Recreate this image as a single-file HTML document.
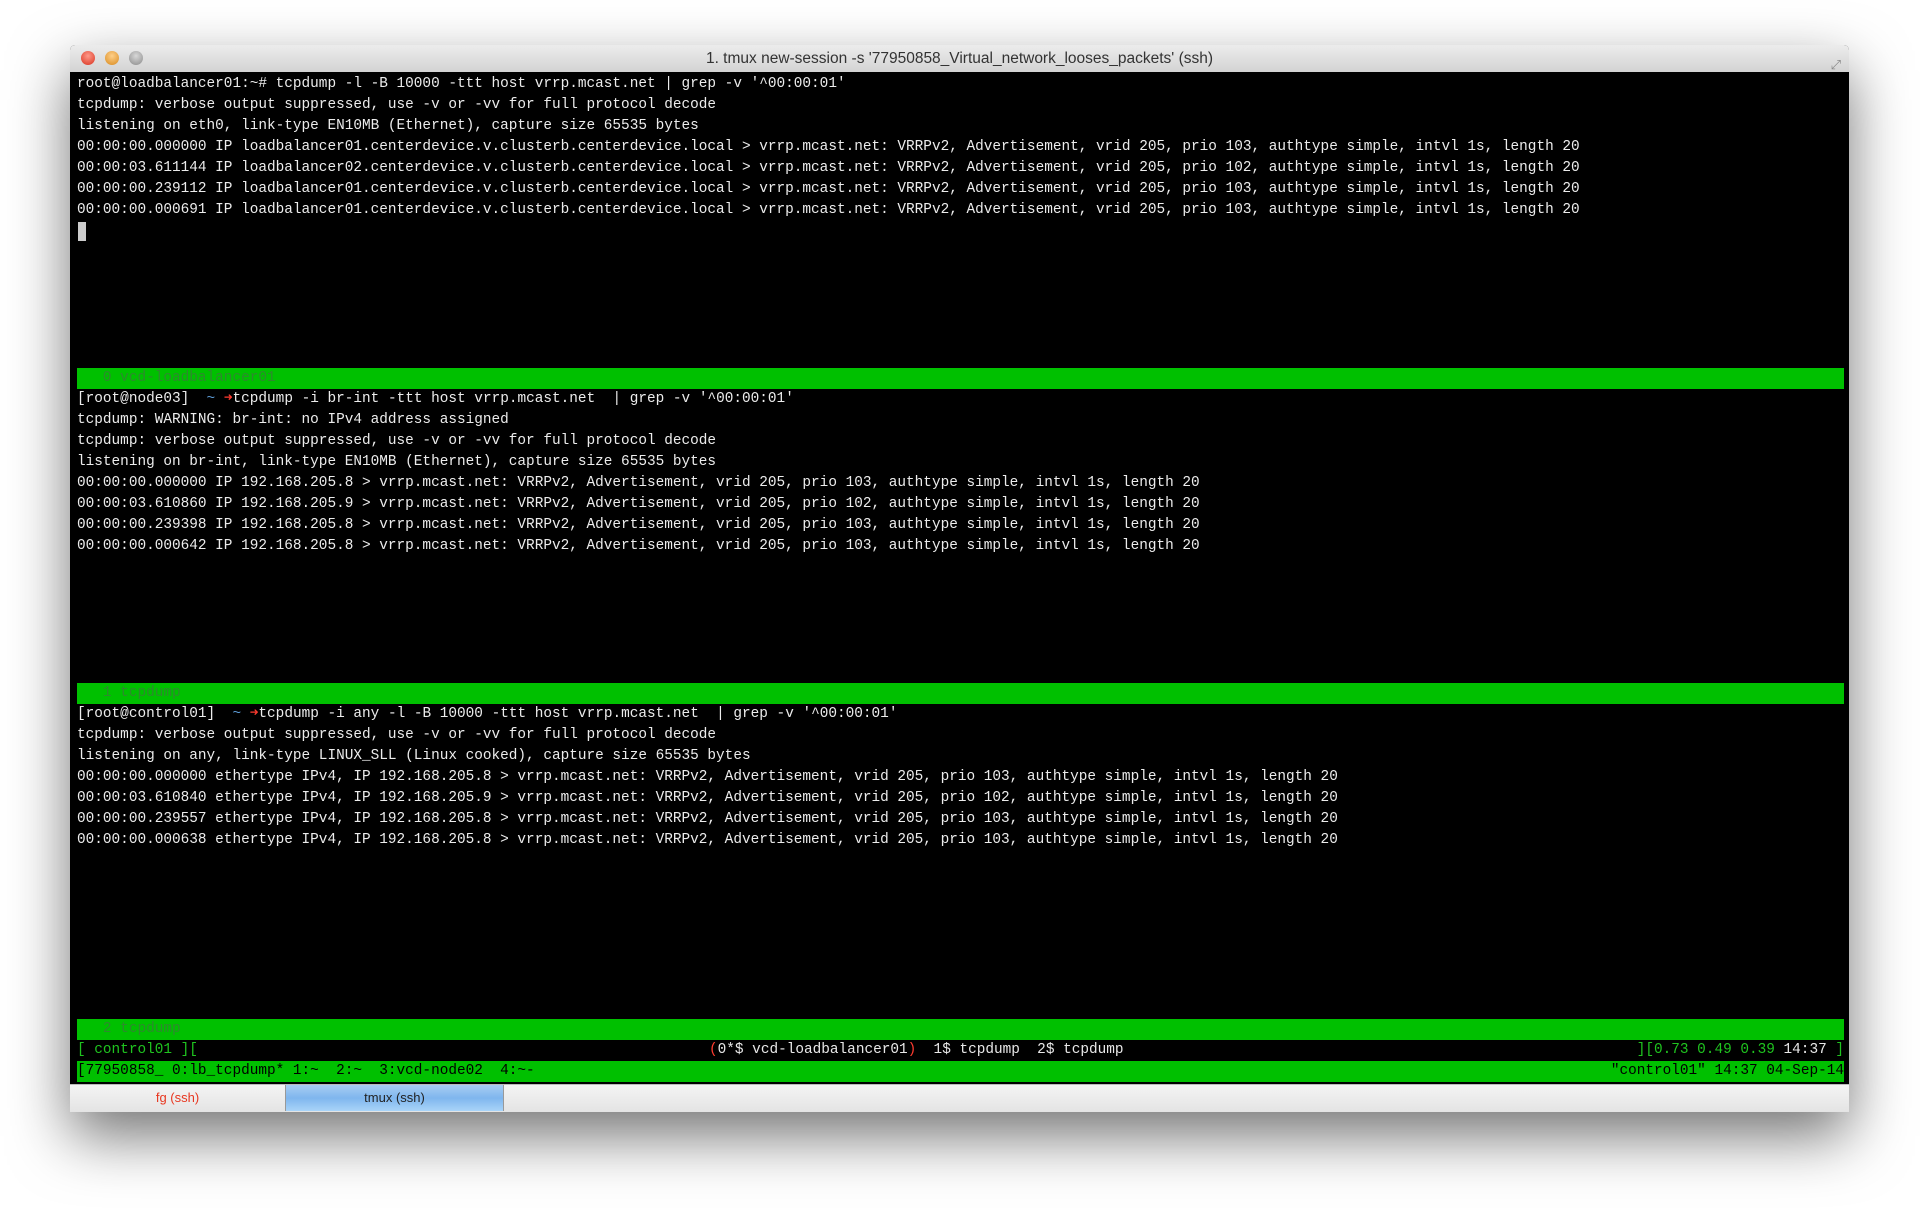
<!DOCTYPE html>
<html><head><meta charset="utf-8"><style>
body{margin:0;width:1920px;height:1210px;background:#fff;position:relative;overflow:hidden;font-family:"Liberation Sans",sans-serif}
.win{position:absolute;left:70px;top:45px;width:1779px;height:1066px;box-shadow:0 25px 60px rgba(0,0,0,.55);background:#000;border-radius:5px 5px 0 0}
.title{position:absolute;left:0;top:0;width:100%;height:27px;background:linear-gradient(#ececec,#d3d3d3);border-radius:5px 5px 0 0;text-align:center;font-size:15.5px;line-height:27px;color:#333}
.dot{position:absolute;top:6px;width:14px;height:14px;border-radius:50%}
.term{position:absolute;left:0;top:27px;width:100%;height:1012px;background:#000}
.tabs{position:absolute;left:0;top:1039px;width:100%;height:27px;background:linear-gradient(#f4f4f4,#e4e4e4);border-top:1px solid #bbb;font-size:13px;line-height:26px}
pre{position:absolute;left:7px;top:0;margin:0;font-family:"Liberation Mono",monospace;font-size:14.4px;line-height:21px;color:#ececec;white-space:pre}
.row{position:absolute;left:7px;height:21px;font-family:"Liberation Mono",monospace;font-size:14.4px;line-height:21px;white-space:pre}
.gb{background:#00c000;width:1767px;color:#2d8a2d}
.g{color:#1fc41f}.r{color:#ff3b2f}.w{color:#e8e8e8}.b{color:#5c9bd5}
</style></head><body>
<div class="win">
<div class="title">1. tmux new-session -s '77950858_Virtual_network_looses_packets' (ssh)
<div class="dot" style="left:11px;background:radial-gradient(circle at 50% 35%,#ff9a8a,#d8321f)"></div>
<div class="dot" style="left:35px;background:radial-gradient(circle at 50% 35%,#ffd08a,#d88a1f)"></div>
<div class="dot" style="left:59px;background:radial-gradient(circle at 50% 35%,#d8d8d8,#8a8a8a)"></div>
<div style="position:absolute;right:8px;top:6px;color:#888;font-size:13px">⤢</div>
</div>
<div class="term">
<pre style="top:2px">root@loadbalancer01:~# tcpdump -l -B 10000 -ttt host vrrp.mcast.net | grep -v '^00:00:01'
tcpdump: verbose output suppressed, use -v or -vv for full protocol decode
listening on eth0, link-type EN10MB (Ethernet), capture size 65535 bytes
00:00:00.000000 IP loadbalancer01.centerdevice.v.clusterb.centerdevice.local &gt; vrrp.mcast.net: VRRPv2, Advertisement, vrid 205, prio 103, authtype simple, intvl 1s, length 20
00:00:03.611144 IP loadbalancer02.centerdevice.v.clusterb.centerdevice.local &gt; vrrp.mcast.net: VRRPv2, Advertisement, vrid 205, prio 102, authtype simple, intvl 1s, length 20
00:00:00.239112 IP loadbalancer01.centerdevice.v.clusterb.centerdevice.local &gt; vrrp.mcast.net: VRRPv2, Advertisement, vrid 205, prio 103, authtype simple, intvl 1s, length 20
00:00:00.000691 IP loadbalancer01.centerdevice.v.clusterb.centerdevice.local &gt; vrrp.mcast.net: VRRPv2, Advertisement, vrid 205, prio 103, authtype simple, intvl 1s, length 20</pre>
<div style="position:absolute;left:8px;top:150px;width:8px;height:19px;background:#ccc"></div>
<div class="row gb" style="top:296px">   0 vcd-loadbalancer01</div>
<pre style="top:317px">[root@node03]  <span class="b">~</span> <span class="r">➜</span>tcpdump -i br-int -ttt host vrrp.mcast.net  | grep -v '^00:00:01'
tcpdump: WARNING: br-int: no IPv4 address assigned
tcpdump: verbose output suppressed, use -v or -vv for full protocol decode
listening on br-int, link-type EN10MB (Ethernet), capture size 65535 bytes
00:00:00.000000 IP 192.168.205.8 &gt; vrrp.mcast.net: VRRPv2, Advertisement, vrid 205, prio 103, authtype simple, intvl 1s, length 20
00:00:03.610860 IP 192.168.205.9 &gt; vrrp.mcast.net: VRRPv2, Advertisement, vrid 205, prio 102, authtype simple, intvl 1s, length 20
00:00:00.239398 IP 192.168.205.8 &gt; vrrp.mcast.net: VRRPv2, Advertisement, vrid 205, prio 103, authtype simple, intvl 1s, length 20
00:00:00.000642 IP 192.168.205.8 &gt; vrrp.mcast.net: VRRPv2, Advertisement, vrid 205, prio 103, authtype simple, intvl 1s, length 20</pre>
<div class="row gb" style="top:611px">   1 tcpdump</div>
<pre style="top:632px">[root@control01]  <span class="b">~</span> <span class="r">➜</span>tcpdump -i any -l -B 10000 -ttt host vrrp.mcast.net  | grep -v '^00:00:01'
tcpdump: verbose output suppressed, use -v or -vv for full protocol decode
listening on any, link-type LINUX_SLL (Linux cooked), capture size 65535 bytes
00:00:00.000000 ethertype IPv4, IP 192.168.205.8 &gt; vrrp.mcast.net: VRRPv2, Advertisement, vrid 205, prio 103, authtype simple, intvl 1s, length 20
00:00:03.610840 ethertype IPv4, IP 192.168.205.9 &gt; vrrp.mcast.net: VRRPv2, Advertisement, vrid 205, prio 102, authtype simple, intvl 1s, length 20
00:00:00.239557 ethertype IPv4, IP 192.168.205.8 &gt; vrrp.mcast.net: VRRPv2, Advertisement, vrid 205, prio 103, authtype simple, intvl 1s, length 20
00:00:00.000638 ethertype IPv4, IP 192.168.205.8 &gt; vrrp.mcast.net: VRRPv2, Advertisement, vrid 205, prio 103, authtype simple, intvl 1s, length 20</pre>
<div class="row gb" style="top:947px">   2 tcpdump</div>
<div class="row g" style="top:968px;width:1767px">[ control01 ][<span style="position:absolute;left:632px" class="w"><span class="r">(</span>0*$ vcd-loadbalancer01<span class="r">)</span>  1$ tcpdump  2$ tcpdump</span><span style="position:absolute;right:0">][0.73 0.49 0.39 <span class="w">14:37</span> ]</span></div>
<div class="row gb" style="top:989px;color:#000">[77950858_ 0:lb_tcpdump* 1:~  2:~  3:vcd-node02  4:~-<span style="position:absolute;right:0">"control01" 14:37 04-Sep-14</span></div>
</div>
<div class="tabs">
<div style="position:absolute;left:0;width:215px;text-align:center;color:#e8361f">fg (ssh)</div>
<div style="position:absolute;left:215px;width:217px;height:26px;text-align:center;color:#222;background:linear-gradient(#a8cdf2,#7fb6ee 50%,#a9d4f8);border-left:1px solid #999;border-right:1px solid #999">tmux (ssh)</div>
</div>
</div>
</body></html>
